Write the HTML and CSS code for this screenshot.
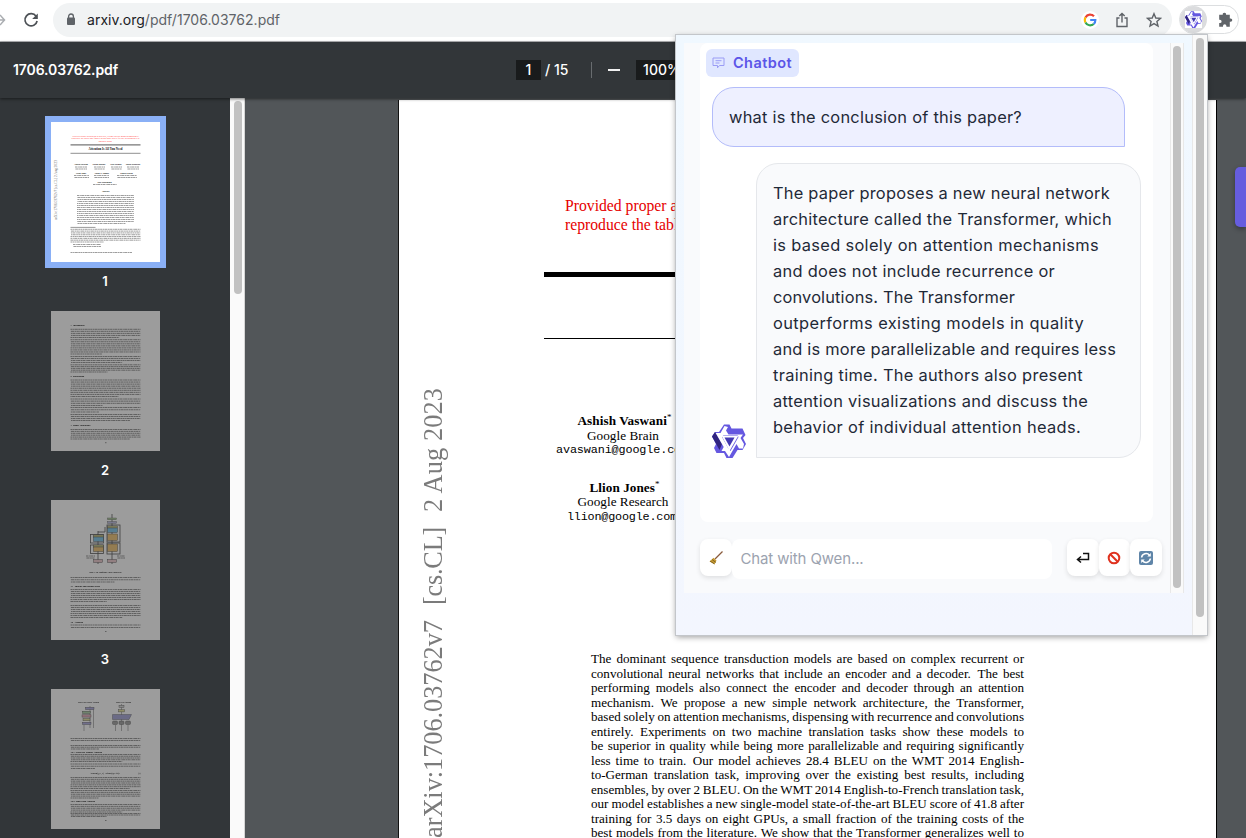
FILE: index.html
```html
<!DOCTYPE html>
<html lang="en">
<head>
<meta charset="utf-8">
<title>1706.03762.pdf</title>
<link rel="stylesheet" href="styles.css">
</head>
<body>
<div class="browser">
  <header class="navbar">
    <svg class="forward" width="6" height="16" viewBox="0 0 6 16"><path d="M0 3l4.5 5L0 13M0 8h4"/></svg>
    <svg class="reload" width="18" height="18" viewBox="0 0 18 18"><path d="M14.1 5.3A6.1 6.1 0 1 0 15.1 10"/><path class="solid" d="M15.8 2.4v5.6h-5.6z"/></svg>
    <div class="address">
      <svg width="10" height="13" viewBox="0 0 10 13"><path d="M2.6 5V3.4a2.4 2.4 0 0 1 4.8 0V5" fill="none" stroke="#5f6368" stroke-width="1.3"/><rect x="1" y="4.6" width="8" height="7.4" rx="1" fill="#5f6368"/></svg>
      <span class="url" data-len="193"><b>arxiv.org</b>/pdf/1706.03762.pdf</span>
      <div class="actions">
        <svg width="14" height="14" viewBox="0 0 14 14" fill="none" stroke-width="2.2"><path d="M11 3.2A5.3 5.3 0 0 0 2.5 4.4" stroke="#ea4335"/><path d="M2.5 4.4a5.3 5.3 0 0 0 0 5.1" stroke="#fbbc05"/><path d="M2.5 9.5a5.3 5.3 0 0 0 8.2 1.5" stroke="#34a853"/><path d="M7.2 7h5.2a5.3 5.3 0 0 1-1.7 4" stroke="#4285f4"/></svg>
        <svg width="16" height="16" viewBox="0 0 16 16" class="line"><path d="M5.5 6H3v8.5h10V6h-2.5M8 10.5V1.5M5.3 4.1L8 1.4l2.7 2.7"/></svg>
        <svg width="16" height="16" viewBox="0 0 16 16" class="line"><path d="M8 1.7l1.8 4.3 4.6.4-3.5 3.1 1.1 4.6L8 11.6 4 14.1l1.1-4.6-3.5-3.1 4.6-.4z"/></svg>
      </div>
    </div>
    <div class="extensions">
      <span class="ext-active"><svg width="17" height="17" viewBox="0 0 34 34"><use href="#qwen"/></svg></span>
      <svg width="16" height="16" viewBox="0 0 16 16"><path fill="#5f6368" d="M6.6 1a1.7 1.7 0 0 1 1.7 2H12v3.7h.8a1.7 1.7 0 0 1 0 3.4H12V15H8.6v-.8a1.7 1.7 0 0 0-3.4 0v.8H1.4v-3.6h.7a1.7 1.7 0 0 0 0-3.4h-.7V3h3.5a1.7 1.7 0 0 1 1.7-2z" transform="translate(.8 -.3)"/></svg>
    </div>
  </header>

  <div class="toolbar">
    <span class="filename" data-len="105">1706.03762.pdf</span>
    <div class="controls">
      <span class="box page-box">1</span><span class="total">/&nbsp;15</span>
      <i class="divider"></i><i class="minus"></i>
      <span class="box zoom-box">100%</span>
    </div>
  </div>

  <div class="viewer">
    <aside class="thumbs">
      <figure class="current"><svg class="thumb" id="t1" width="109" height="140" viewBox="0 0 109 140">
        <g class="red" text-anchor="middle"><text x="54.5" y="14.5" textLength="66">Provided proper attribution is provided, Google hereby grants permission to</text><text x="54.5" y="17.1" textLength="68">reproduce the tables and figures in this paper solely for use in journalistic or</text><text x="54.5" y="19.7">scholarly works.</text></g>
        <path d="M19.5 22.9h70" stroke="#777" stroke-width="1.1"/><path d="M19.5 31.3h70" stroke="#444" stroke-width=".6"/>
        <text class="title" x="54.5" y="28.3" text-anchor="middle" textLength="34">Attention Is All You Need</text>
        <g class="names" text-anchor="middle"><text x="30" y="43.2">Ashish Vaswani</text><text x="48" y="43.2">Noam Shazeer</text><text x="65" y="43.2">Niki Parmar</text><text x="82" y="43.2">Jakob Uszkoreit</text><text x="30" y="52">Llion Jones</text><text x="50.6" y="52">Aidan N. Gomez</text><text x="75.6" y="52">Łukasz Kaiser</text><text x="53.6" y="61">Illia Polosukhin</text><text x="54.5" y="70.4">Abstract</text></g>
        <text class="stamp" transform="translate(6.4 98) rotate(-90)" textLength="60">arXiv:1706.03762v7 [cs.CL] 2 Aug 2023</text>
        <path d="M19.5 105.4h25" stroke="#333" stroke-width=".5"/>
      </svg><figcaption>1</figcaption></figure>
      <figure><svg class="thumb" id="t2" width="109" height="140" viewBox="0 0 109 140">
        <g class="head"><text x="19.5" y="14.6">1&#160;&#160; Introduction</text><text x="19.5" y="66.4">2&#160;&#160; Background</text><text x="19.5" y="115.4">3&#160;&#160; Model Architecture</text></g>
      </svg><figcaption>2</figcaption></figure>
      <figure><svg class="thumb" id="t3" width="109" height="140" viewBox="0 0 109 140">
        <g fill="none" stroke="#666" stroke-width=".8"><rect x="39.5" y="34.5" width="13" height="8.5"/><rect x="39.5" y="45" width="13" height="8.5"/><rect x="56" y="25" width="13" height="17"/><rect x="56" y="43" width="13" height="11"/><path d="M47 31v33M61 14v50M47 32h7v-5"/></g>
        <g fill="#b8d6a8" stroke="#777" stroke-width=".4"><rect x="56.5" y="18" width="9" height="1.8"/><rect x="56.5" y="21.5" width="9" height="1.8" fill="#c4c4e4"/></g>
        <g stroke="#555" stroke-width=".4"><rect x="42.5" y="35" width="10" height="2" fill="#e0e0a0"/><rect x="42.5" y="37" width="10" height="4.5" fill="#8dcdec"/><rect x="42.5" y="45" width="10" height="2" fill="#e0e0a0"/><rect x="42.5" y="47" width="10" height="4.5" fill="#f2cb85"/><rect x="56.5" y="26" width="10" height="2" fill="#e0e0a0"/><rect x="56.5" y="28" width="10" height="4.5" fill="#8dcdec"/><rect x="56.5" y="34" width="10" height="6.5" fill="#f2cb85"/><rect x="56.5" y="44" width="10" height="7.5" fill="#f2cb85"/><rect x="42.5" y="59.5" width="9" height="3" fill="#f0d0d4"/><rect x="56.5" y="59.5" width="9" height="3" fill="#f0d0d4"/></g>
        <text class="tiny" x="38" y="73.2" textLength="33">Figure 1: The Transformer - model architecture.</text>
        <g class="head"><text x="19.5" y="87">3.1&#160;&#160; Encoder and Decoder Stacks</text><text x="19.5" y="122.5">3.2&#160;&#160; Attention</text></g>
      </svg><figcaption>3</figcaption></figure>
      <figure><svg class="thumb" id="t4" width="109" height="140" viewBox="0 0 109 140">
        <text class="tiny" x="27" y="14.2" textLength="21">Scaled Dot-Product Attention</text><text class="tiny" x="65" y="14.2" textLength="15">Multi-Head Attention</text>
        <path d="M39 17v22M42.5 19v20M33 36v6M70.5 15v27M64.5 36v6M77 36v6" stroke="#777" stroke-width=".5"/>
        <g stroke="#666" stroke-width=".4"><rect x="34.5" y="18.3" width="8.5" height="2.3" fill="#b8b4e4"/><rect x="31.5" y="22.2" width="8" height="2.3" fill="#b4d6b0"/><rect x="31" y="25.8" width="9" height="2.3" fill="#e8b6c4"/><rect x="32" y="29.5" width="7" height="2.3" fill="#e8e6a8"/><rect x="31.5" y="33.2" width="8.5" height="2.3" fill="#b8b4e4"/><rect x="68" y="16.3" width="5" height="2.2" fill="#ddd"/><rect x="67.5" y="20.7" width="6" height="2.2" fill="#e8e6a8"/><path d="M61.5 25.5h19l-2.5 5h-16.5z" fill="#b0b0dc"/><rect x="61.5" y="32" width="5" height="3.5" rx="1" fill="#aaa"/><rect x="68" y="32" width="5" height="3.5" rx="1" fill="#aaa"/><rect x="74.5" y="32" width="5" height="3.5" rx="1" fill="#aaa"/></g>
        <text class="tiny" x="39" y="85.2" textLength="30">Attention(Q, K, V) = softmax(QKᵀ/√d)V</text><text class="tiny" x="87" y="85.2">(1)</text>
        <g class="head"><text x="19.5" y="63.9">3.2.1&#160; Scaled Dot-Product Attention</text><text x="19.5" y="113.3">3.2.2&#160; Multi-Head Attention</text></g>
      </svg></figure>
    </aside>
    <div class="side-scroll"><i></i></div>
    <main class="canvas">
      <article class="paper">
        <div class="arxiv-stamp"><span data-len="218">arXiv:1706.03762v7</span><span data-len="78">[cs.CL]</span><span data-len="124">2 Aug 2023</span></div>
        <div class="paper-body">
          <p class="notice">Provided proper attribution<br>reproduce the tables and</p>
          <hr class="thick"><hr class="thin">
          <div class="author"><b data-len="94">Ashish Vaswani<sup>*</sup></b><span data-len="72">Google Brain</span><code data-len="132">avaswani@google.com</code></div>
          <div class="author"><b data-len="70">Llion Jones<sup>*</sup></b><span data-len="91">Google Research</span><code data-len="110">llion@google.com</code></div>
          <div class="abstract">
            <p>The dominant sequence transduction models are based on complex recurrent or</p>
            <p>convolutional neural networks that include an encoder and a decoder.&ensp;The best</p>
            <p>performing models also connect the encoder and decoder through an attention</p>
            <p>mechanism.&ensp;We propose a new simple network architecture, the Transformer,</p>
            <p>based solely on attention mechanisms, dispensing with recurrence and convolutions</p>
            <p>entirely.&ensp;Experiments on two machine translation tasks show these models to</p>
            <p>be superior in quality while being more parallelizable and requiring significantly</p>
            <p>less time to train.&ensp;Our model achieves 28.4 BLEU on the WMT 2014 English-</p>
            <p>to-German translation task, improving over the existing best results, including</p>
            <p>ensembles, by over 2 BLEU. On the WMT 2014 English-to-French translation task,</p>
            <p>our model establishes a new single-model state-of-the-art BLEU score of 41.8 after</p>
            <p>training for 3.5 days on eight GPUs, a small fraction of the training costs of the</p>
            <p>best models from the literature. We show that the Transformer generalizes well to</p>
          </div>
        </div>
      </article>
      <i class="side-tab"></i>
    </main>
  </div>
</div>

<section class="popup">
  <div class="popup-body">
    <div class="app">
      <div class="chat">
        <div class="label"><svg width="13" height="12" viewBox="0 0 13 12"><path d="M1 1h11v7.500H7.500L5.500 10.800V8.500H1zM3.500 3.700h6M3.500 6h4"/></svg><span data-len="59">Chatbot</span></div>
        <div class="bubble user"><span data-len="293">what is the conclusion of this paper?</span></div>
        <div class="reply">
          <svg class="avatar" width="34" height="34" viewBox="0 0 34 34">
            <g id="qwen"><path fill="#6558e0" d="M12 .5l5.500 0 2 4h11l3 6.500-2.500 3 3 6-3.500 6h-5l-5 8h-6l-2.500-5H4.500L2 24l2-4L0 12.500 3 8h4z"/><path fill="#30247f" d="M0 12.500L3 8l7 12-2.500 6z"/><path fill="#fff" d="M12.500 2L8.500 9H3.700l8 14-2.200 4h3.500l4 6 7.500-13 2.500 4.500h4L32 20l-3.500-6 2.500-3.500H16.500L14 6.500l2-3.500z"/><path fill="#6558e0" d="M10 13l1.500-2h14l1 2L18.500 27 16 24z"/><path fill="#fff" d="M9.500 11.500h17L17.500 27z"/><path fill="#4339b2" d="M12.500 13.500h10L17.500 22.500z"/></g>
          </svg>
          <div class="bubble bot"><span data-len="337">The paper proposes a new neural network</span><span data-len="339">architecture called the Transformer, which</span><span data-len="326">is based solely on attention mechanisms</span><span data-len="282">and does not include recurrence or</span><span data-len="242">convolutions. The Transformer</span><span data-len="311">outperforms existing models in quality</span><span data-len="343">and is more parallelizable and requires less</span><span data-len="310">training time. The authors also present</span><span data-len="315">attention visualizations and discuss the</span><span data-len="308">behavior of individual attention heads.</span></div>
        </div>
      </div>
      <div class="composer">
        <button class="clear"><svg width="16" height="16" viewBox="0 0 16 16"><path d="M14.5 1.500L7 9" stroke="#8a5a3c" stroke-width="1.2"/><path d="M5.5 7.800l3 2.800-2 3.600L1.500 11.500z" fill="#c79a32"/><path d="M2 11l4.500 3M4 9.500l4 3" stroke="#6f571b" stroke-width=".8"/></svg></button>
        <div class="field"><span data-len="123">Chat with Qwen...</span></div>
        <div class="buttons">
          <button><svg width="14" height="14" viewBox="0 0 14 14" fill="none" stroke="#111" stroke-width="1.5"><path d="M7 2.500h5.500v6H2M5 5.500l-3.500 3L5 11.500"/></svg></button>
          <button><svg width="14" height="14" viewBox="0 0 14 14" fill="none" stroke="#e0321f" stroke-width="2"><circle cx="7" cy="7" r="5.300"/><path d="M3.300 3.300l7.400 7.400"/></svg></button>
          <button><svg width="14" height="14" viewBox="0 0 14 14"><rect width="14" height="14" rx="2" fill="#5f85a8"/><path d="M2.600 6.500a4.500 4.500 0 0 1 7.900-2.300M11.400 7.500a4.500 4.500 0 0 1-7.900 2.300" fill="none" stroke="#fff" stroke-width="1.6"/><path d="M8.300 5.500h3.500V2zM5.700 8.500H2.200V12z" fill="#fff"/></svg></button>
        </div>
      </div>
    </div>
    <div class="inner-scroll"><i></i></div>
  </div>
  <div class="outer-scroll"><i></i></div>
</section>
<script src="page.js"></script>
</body>
</html>
```

FILE: styles.css
```css
* { box-sizing: border-box; }
body { margin: 0; overflow: hidden; font-family: Inter, "Liberation Sans", sans-serif; }
svg { display: block; flex: none; }
p, figure, hr { margin: 0; }
[data-len] { white-space: nowrap; }

.browser { display: flex; flex-direction: column; width: 1246px; height: 838px; overflow: hidden; }
.navbar { display: flex; align-items: center; height: 42px; flex: none; padding-bottom: 2px; background: #fff; border-bottom: 1px solid #b5b6b8; }
.forward { fill: none; stroke: #aaadb1; stroke-width: 1.5; }
.reload { margin-left: 16px; fill: none; stroke: #4d5156; stroke-width: 1.7; }
.reload .solid { fill: #4d5156; stroke: none; }
.address { display: flex; align-items: center; width: 1119px; height: 34px; margin-left: 13px; padding: 0 10px 0 13px; border-radius: 17px; background: #f1f3f4; }
.url { margin-left: 11px; font-size: 14px; color: #5f6368; }
.url b { font-weight: 400; color: #202124; }
.actions { display: flex; align-items: center; gap: 16px; margin-left: auto; }
.actions svg:first-child { background: #fff; border-radius: 50%; box-shadow: 0 0 0 2px #fff; margin-right: 1px; }
.line { fill: none; stroke: #5f6368; stroke-width: 1.4; }
.extensions { display: flex; align-items: center; gap: 10px; width: 60px; height: 29px; margin-left: 7px; border: 1px solid #dcdee0; border-radius: 15px; }
.ext-active { display: grid; place-items: center; width: 27px; height: 27px; border-radius: 50%; background: #dbdcde; }
.ext-active svg { background: #fff; }

.toolbar { position: relative; display: flex; align-items: center; height: 56px; flex: none; padding: 0 0 1px 13px; background: #323639; color: #fff; box-shadow: 0 1px 3px #0008; z-index: 1; font-size: 14px; font-weight: 500; }
.filename { width: 503px; font-weight: 600; }
.controls { display: flex; align-items: center; }
.box { display: grid; place-items: center; height: 20px; background: #191b1c; }
.page-box { width: 25px; }
.total { width: 50px; padding-left: 4px; }
.divider { width: 1px; height: 16px; background: #686c6f; }
.minus { width: 12px; height: 2px; margin: 0 16px; background: #f1f1f1; }
.zoom-box { width: 52px; }

.viewer { display: flex; flex: 1; min-height: 0; background: #525659; }
.thumbs { display: flex; flex-direction: column; align-items: center; width: 230px; padding: 24px 20px 0 0; background: #323639; overflow: hidden; }
.thumbs figure { width: 109px; height: 189px; flex: none; }
.thumb { background: #fff; }
figure:not(.current) .thumb { filter: brightness(.61); }
.current .thumb { outline: 6px solid #8ab0f6; }
figcaption { margin-top: 11px; text-align: center; font-size: 13px; line-height: 17px; font-weight: 600; color: #fff; }
.thumb text { font-family: "Liberation Serif", serif; font-size: 2.1px; }
.thumb .red { fill: #f22; }
.thumb .title { font-size: 3px; font-weight: 700; }
.thumb .names text, .thumb .head text { font-weight: 700; }
.thumb .stamp { font-size: 4px; fill: #777; }
.side-scroll { width: 15px; flex: none; padding: 3px 0 0 4px; background: #fafafa; border-right: 1px solid #d5d5d5; }
.side-scroll i, .inner-scroll i, .outer-scroll i { display: block; width: 8px; border-radius: 4px; background: #c1c1c1; }
.side-scroll i { height: 193px; }
.canvas { display: flex; flex: 1; padding: 2px 0 0 153px; overflow: hidden; }
.paper { display: flex; align-items: flex-start; width: 819px; height: 760px; flex: none; border-right: 1px solid #000; border-left: 1px solid #111; background: #fff; overflow: hidden; font-family: "Liberation Serif", serif; }
.side-tab { width: 11px; height: 60px; margin: 67px 0 0 18px; flex: none; border-radius: 5px 0 0 5px; background: #665ddf; box-shadow: 0 2px 5px #0005; }
.arxiv-stamp { display: flex; gap: 15px; width: 30px; margin: 288px 0 0 20px; flex: none; writing-mode: vertical-rl; transform: rotate(180deg); font-size: 26.3px; line-height: 30px; color: #7b7b7b; }
.paper-body { width: 530px; margin-left: 95px; flex: none; }
.notice { padding: 97px 0 0 21px; color: #e60000; font-size: 15.7px; line-height: 18.5px; white-space: nowrap; }
.paper hr { border: 0; background: #000; }
.thick { height: 5px; margin-top: 38px; }
.thin { height: 1px; margin-top: 61px; }
.author { display: flex; flex-direction: column; align-items: center; width: 158px; height: 66.5px; font-size: 13.2px; line-height: 14.7px; }
.thin + .author { margin-top: 75px; }
.author b { padding-left: 3px; }
.author sup { font-size: 9px; line-height: 0; font-weight: 400; }
.author code { font: 11.8px/14.7px "Liberation Mono", monospace; margin-left: -2px; }
.abstract { width: 433px; margin: 105px 0 0 47px; font-size: 13.1px; line-height: 14.53px; }
.abstract p { white-space: nowrap; width: max-content; }

.popup { position: absolute; z-index: 2; left: 676px; top: 35px; display: flex; width: 531px; height: 600px; background: linear-gradient(#f0f8ff, #f3f6fe); box-shadow: 0 0 0 1px #c3c6ca, 0 2px 6px #0006; }
.popup-body { display: flex; align-items: flex-start; width: 516px; padding: 8px 0 0 8px; }
.app { width: 486px; height: 550px; padding: 0 0 0 16px; background: #f9fafc; }
.inner-scroll { width: 14px; height: 550px; padding: 3px 0 0 2px; background: #fafafa; border: solid #e8e8e8; border-width: 0 1px; }
.inner-scroll i { height: 542px; }
.outer-scroll { width: 15px; padding: 3px 0 0 3px; background: #fafafa; border-left: 1px solid #e8e8e8; }
.outer-scroll i { height: 579px; }
.chat { width: 453px; height: 479px; padding: 6px 12px 0 6px; border-radius: 8px; background: #fff; color: #1f2937; }
.label { display: flex; align-items: center; gap: 8px; width: 93px; height: 28px; padding: 0 0 2px 6px; border-radius: 6px; background: #e0e7ff; color: #5b55e8; font-size: 14.5px; font-weight: 600; }
.label svg { margin-top: 2px; fill: none; stroke: #9a9cf5; stroke-width: 1; }
.bubble { font-size: 16.4px; line-height: 26px; border: 1px solid #e5e7eb; border-radius: 22px; }
.user { width: 413px; height: 60px; margin: 10px 0 0 6px; padding: 16px; background: #eef0ff; border-color: #b3bcfa; border-bottom-right-radius: 0; }
.reply { display: flex; align-items: flex-end; gap: 10px; margin: 16px 0 0 6px; }
.bot { display: flex; flex-direction: column; align-items: flex-start; width: 385px; height: 295px; padding: 16px; background: #f9fafc; border-bottom-left-radius: 0; flex: none; }
.composer { display: flex; align-items: flex-start; padding-top: 17px; }
.composer button { display: grid; place-items: center; width: 31.5px; height: 37px; padding: 0; border: 0; border-radius: 8px; background: #fff; box-shadow: 0 2px 5px #0000001c; }
.field { width: 320px; height: 40px; padding: 0 9px; border-radius: 8px; background: #fff; color: #9ca3af; font-size: 15px; line-height: 39px; }
.buttons { display: flex; margin-left: 15.5px; }
```

FILE: page.js
```js
// Tracks each measured line out to its set length.
document.querySelectorAll('[data-len]').forEach(el => {
  const range = document.createRange();
  range.selectNodeContents(el);
  const box = range.getBoundingClientRect();
  const natural = el.closest('.arxiv-stamp') ? box.height : box.width;
  el.style.letterSpacing = (el.dataset.len - natural) / el.textContent.length + 'px';
});

// Sets the abstract flush on both sides.
document.querySelectorAll('.abstract p').forEach(p => {
  const gaps = p.textContent.split(' ').length - 1;
  p.style.wordSpacing = (433 - p.getBoundingClientRect().width) / gaps + 'px';
});

// Page thumbnails: [first line y, last line y, left, right]
const blocks = {
  t1: [[45, 47, 24, 36], [45, 47, 43, 54], [45, 47, 60, 71], [45, 47, 76, 88], [53.5, 55.5, 23, 38], [53.5, 55.5, 43, 58], [53.5, 55.5, 66, 86], [62.5, 62.5, 42, 66], [73.5, 101.5, 26, 83], [107.3, 120, 19.5, 89.5], [122.5, 124.5, 22, 50], [130.5, 130.5, 19.5, 81]],
  t2: [[18.3, 26.5], [28.7, 43], [45.5, 51.5], [53.8, 61], [69, 85.5], [88, 94.5], [96.5, 101], [103.5, 109.5], [118.5, 128], [131.7, 131.7, 54, 55.5]],
  t3: [[77.5, 82], [89.5, 101.5], [105.5, 117.5], [125, 127.5], [56, 58, 35, 44], [56, 58, 66, 74], [131.5, 131.5, 54, 55.5]],
  t4: [[49.5, 51.5], [56.5, 60], [65.5, 72.5], [75, 79.5], [88.5, 99.5], [101.5, 109], [115.5, 123], [124.5, 127.5], [131.5, 131.5, 54, 55.5]]
};
const ns = 'http://www.w3.org/2000/svg';
for (const [id, list] of Object.entries(blocks)) {
  const svg = document.getElementById(id);
  for (const [top, bottom, left = 19.5, right = 89.5] of list) {
    const count = Math.round((bottom - top) / 1.95);
    for (let i = 0; i <= count; i++) {
      const y = top + (count ? i * (bottom - top) / count : 0);
      const end = count > 1 && i === count ? left + (right - left) * (.35 + (top * 7 % 5) / 9) : right;
      const line = document.createElementNS(ns, 'path');
      line.setAttribute('d', `M${left} ${y}H${end}`);
      line.setAttribute('stroke', '#333');
      line.setAttribute('stroke-opacity', '.48');
      line.setAttribute('stroke-width', '1');
      line.setAttribute('stroke-dasharray', '2.1 .5 1.2 .4 3.1 .5 1.7 .4');
      line.setAttribute('stroke-dashoffset', (i * 3.7) % 9);
      svg.append(line);
    }
  }
}
```
